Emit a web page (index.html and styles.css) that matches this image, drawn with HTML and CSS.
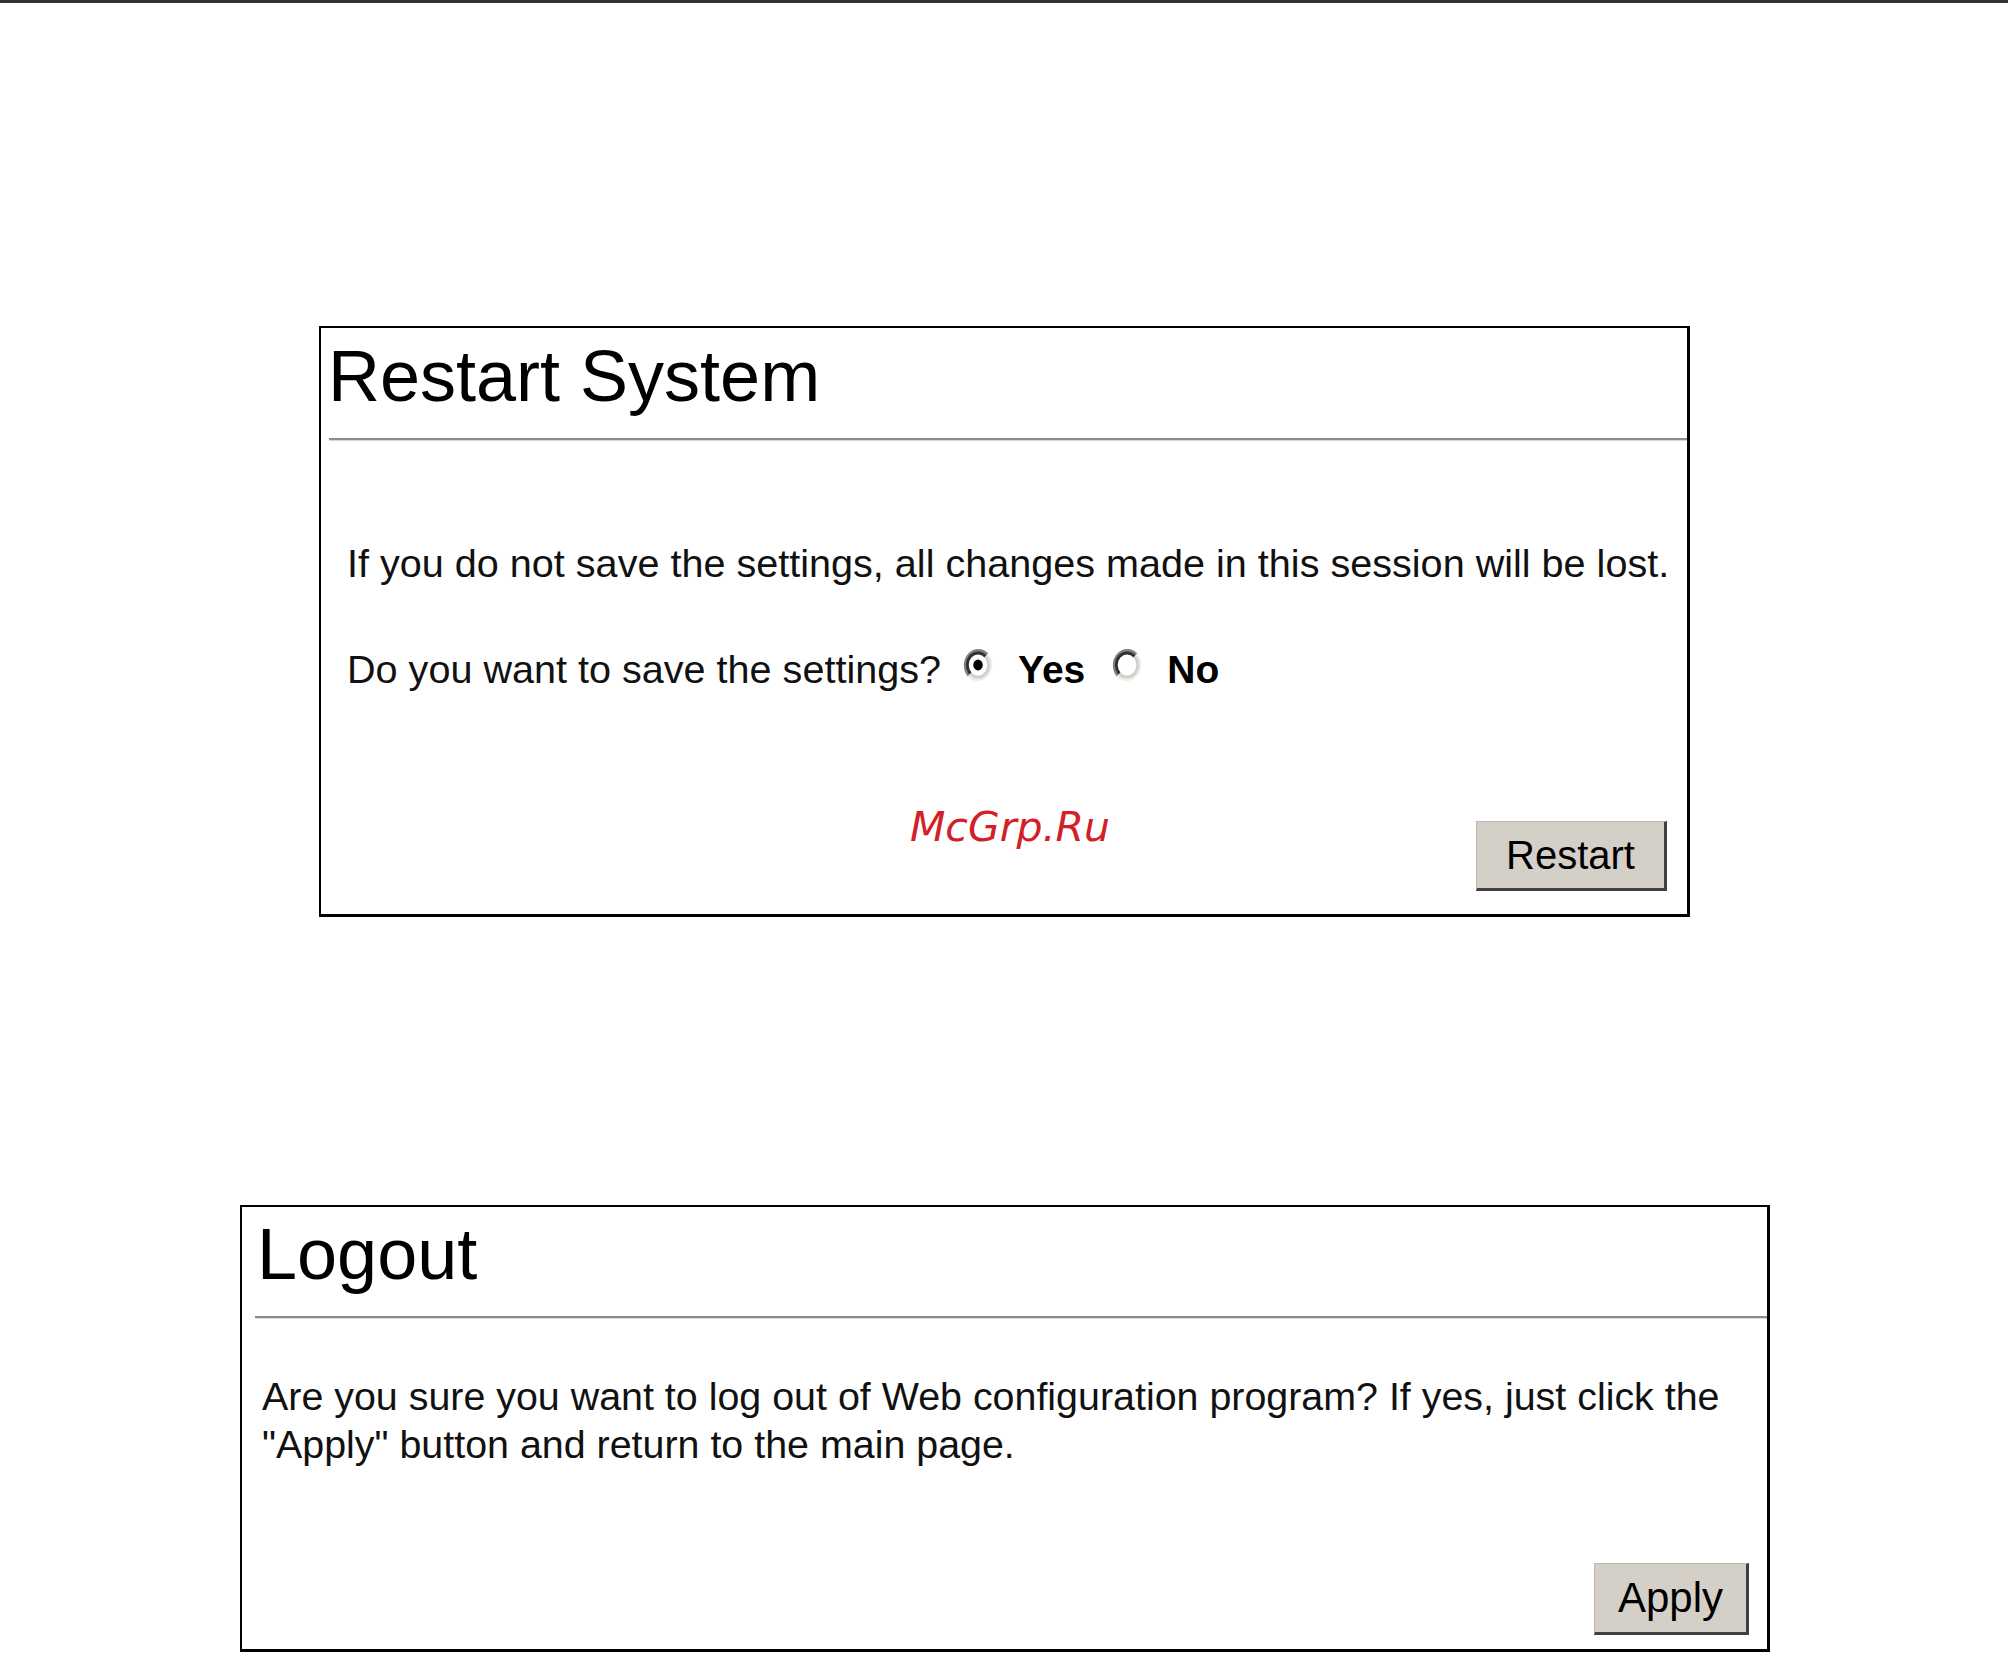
FILE: index.html
```html
<!DOCTYPE html>
<html lang="en">
<head>
    <meta charset="UTF-8">
    <title>Restart System / Logout</title>
    <link rel="stylesheet" href="styles.css">
</head>
<body>
<div class="top-rule"></div>
<div class="page">

    <!-- Restart System -->
    <div class="panel panel-restart">
        <h1 class="panel-title">Restart System</h1>
        <div class="panel-rule"></div>
        <div class="panel-body">
            <p class="msg">If you do not save the settings, all changes made in this session will be lost.</p>
            <p class="msg question">Do you want to save the settings?<label class="choice"><svg class="radio" viewBox="0 0 12 12" preserveAspectRatio="none">
                        <circle cx="6" cy="6" r="5" fill="#fff"/>
                        <path d="M2.29 9.71 A5.25 5.25 0 0 1 9.71 2.29" fill="none" stroke="#808080" stroke-width="1.1"/>
                        <path d="M2.99 9.01 A4.25 4.25 0 0 1 9.01 2.99" fill="none" stroke="#303030" stroke-width="1.1"/>
                        <path d="M9.71 2.29 A5.25 5.25 0 0 1 2.29 9.71" fill="none" stroke="#ececec" stroke-width="1.1"/>
                        <path d="M9.01 2.99 A4.25 4.25 0 0 1 2.99 9.01" fill="none" stroke="#d4d0c8" stroke-width="1.1"/>
                        <circle cx="6" cy="6" r="1.9" fill="#000"/>
                    </svg>Yes</label><label class="choice"><svg class="radio" viewBox="0 0 12 12" preserveAspectRatio="none">
                        <circle cx="6" cy="6" r="5" fill="#fff"/>
                        <path d="M2.29 9.71 A5.25 5.25 0 0 1 9.71 2.29" fill="none" stroke="#808080" stroke-width="1.1"/>
                        <path d="M2.99 9.01 A4.25 4.25 0 0 1 9.01 2.99" fill="none" stroke="#303030" stroke-width="1.1"/>
                        <path d="M9.71 2.29 A5.25 5.25 0 0 1 2.29 9.71" fill="none" stroke="#ececec" stroke-width="1.1"/>
                        <path d="M9.01 2.99 A4.25 4.25 0 0 1 2.99 9.01" fill="none" stroke="#d4d0c8" stroke-width="1.1"/>
                    </svg>No</label></p>
            <div class="actions">
                <button type="button" class="btn">Restart</button>
            </div>
        </div>
        <span class="watermark">McGrp.Ru</span>
    </div>

    <!-- Logout -->
    <div class="panel panel-logout">
        <h1 class="panel-title">Logout</h1>
        <div class="panel-rule"></div>
        <div class="panel-body">
            <p class="msg">Are you sure you want to log out of Web configuration program? If yes, just click the "Apply" button and return to the main page.</p>
            <div class="actions">
                <button type="button" class="btn btn-apply">Apply</button>
            </div>
        </div>
    </div>

</div>
</body>
</html>
```

FILE: styles.css
```css
body {
    margin: 0;
    background: #fff;
    color: #000;
    font-family: "Liberation Sans", Arial, sans-serif;
}
.top-rule {
    height: 3px;
    background: #333;
}
.page {
    padding-top: 323px;
}

/* panels */
.panel {
    position: relative;
    box-sizing: border-box;
    background: #fff;
    border-style: solid;
    border-color: #000;
    border-width: 2px 3px 3px 2px;
}
.panel-restart {
    margin-left: 319px;
    width: 1371px;
}
.panel-logout {
    margin-left: 240px;
    width: 1530px;
    margin-top: 288px;
}
.panel-title {
    margin: 0;
    font-weight: normal;
    font-size: 72px;
    line-height: 1;
}
.panel-rule {
    height: 0;
    border-top: 2px solid #8c8c8c;
    border-bottom: 1px solid #d6d6d6;
}

.panel-restart .panel-title {
    padding: 12px 0 0 7px;
}
.panel-restart .panel-rule {
    margin: 26px 0 0 8px;
}
.panel-restart .panel-body {
    padding: 98px 10px 23px 26px;
}
.panel-restart .actions {
    margin-right: 10px;
}

.panel-logout .panel-title {
    padding: 11px 0 0 15px;
}
.panel-logout .panel-rule {
    margin: 26px 0 0 13px;
}
.panel-logout .panel-body {
    padding: 53px 18px 14px 20px;
}

/* text */
.msg {
    margin: 0;
    font-size: 39.6px;
    line-height: 48px;
    color: #111;
    white-space: nowrap;
}
.panel-logout .msg {
    font-size: 39.4px;
    white-space: normal;
}
.question {
    margin-top: 58px;
}
.choice {
    font-weight: bold;
    font-size: 39px;
    color: #000;
    margin-left: 27px;
}
.choice:first-child {
    margin-left: 22px;
}
.radio {
    width: 30px;
    height: 34px;
    margin-right: 25px;
    vertical-align: 1px;
}

/* buttons */
.actions {
    display: flex;
    justify-content: flex-end;
    margin-top: 127px;
}
.panel-logout .actions {
    margin-top: 95px;
}
.btn {
    box-sizing: border-box;
    width: 191px;
    height: 70px;
    padding: 0;
    font-family: "Liberation Sans", Arial, sans-serif;
    font-size: 40px;
    color: #000;
    background: #d4d0c8;
    border-style: solid;
    border-width: 1px 3px 3px 1px;
    border-color: #bdb9b1 #404040 #404040 #bdb9b1;
}
.btn-apply {
    width: 155px;
    height: 72px;
    font-size: 42px;
}

.watermark {
    position: absolute;
    left: 589px;
    top: 479px;
    font-family: "DejaVu Sans", sans-serif;
    font-style: italic;
    font-size: 41px;
    line-height: 1;
    color: #d32027;
}
```
